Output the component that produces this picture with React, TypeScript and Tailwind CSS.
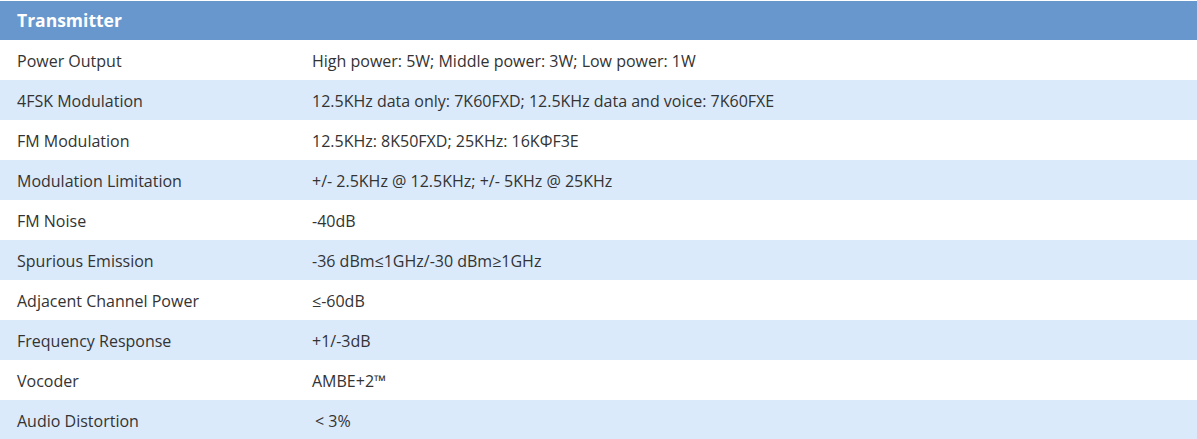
const ROWS: [string, string][] = [
  ['Power Output', 'High power: 5W; Middle power: 3W; Low power: 1W'],
  ['4FSK Modulation', '12.5KHz data only: 7K60FXD; 12.5KHz data and voice: 7K60FXE'],
  ['FM Modulation', '12.5KHz: 8K50FXD; 25KHz: 16KΦF3E'],
  ['Modulation Limitation', '+/- 2.5KHz @ 12.5KHz; +/- 5KHz @ 25KHz'],
  ['FM Noise', '-40dB'],
  ['Spurious Emission', '-36 dBm≤1GHz/-30 dBm≥1GHz'],
  ['Adjacent Channel Power', '≤-60dB'],
  ['Frequency Response', '+1/-3dB'],
  ['Vocoder', 'AMBE+2™'],
  ['Audio Distortion', '< 3%'],
];

export default function App() {
  return (
    <div className="w-[1197px] h-[439px] overflow-hidden bg-white font-['Open_Sans',sans-serif] text-[16px] text-[#333333]">
      <div className="h-[40px] flex items-center bg-[#6897cd] border-t border-white px-[17px] text-[17.5px] font-bold text-white">
        Transmitter
      </div>
      {ROWS.map(([label, value], i) => (
        <div
          key={label}
          className={'h-[40px] flex items-center pt-[1px] ' + (i % 2 === 1 ? 'bg-[#dbeafb]' : 'bg-white')}
        >
          <div className="w-[312px] pl-[17px]">{label}</div>
          <div className={label === 'Audio Distortion' ? 'pl-[3px]' : ''}>{value}</div>
        </div>
      ))}
    </div>
  );
}
